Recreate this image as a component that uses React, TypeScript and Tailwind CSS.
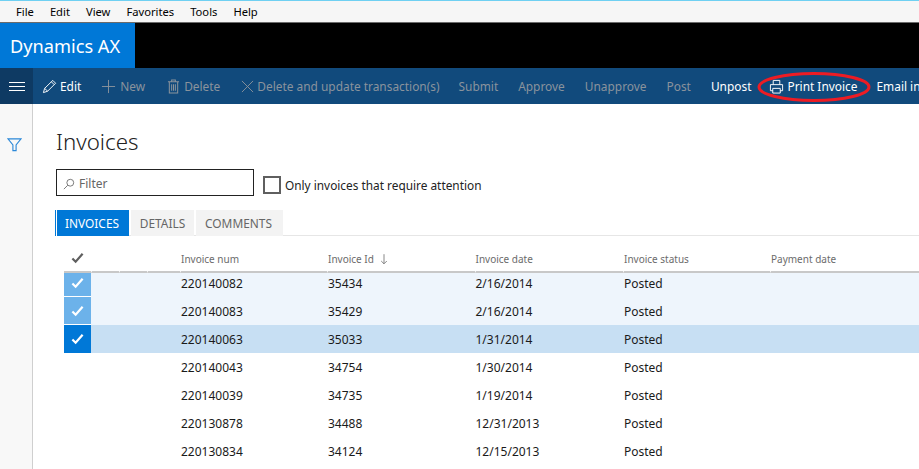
import React from "react";

const font = { fontFamily: '"Noto Sans", "Open Sans", sans-serif' };

const Check = ({ className }: { className: string }) => (
  <svg viewBox="0 0 14 12" className={className} fill="none" stroke="currentColor" strokeWidth="2.4">
    <path d="M1.5 6.5 L5 10 L12.5 1.5" />
  </svg>
);

const menus = ["File", "Edit", "View", "Favorites", "Tools", "Help"];

const rows = [
  ["220140082", "35434", "2/16/2014", 1],
  ["220140083", "35429", "2/16/2014", 1],
  ["220140063", "35033", "1/31/2014", 2],
  ["220140043", "34754", "1/30/2014", 0],
  ["220140039", "34735", "1/19/2014", 0],
  ["220130878", "34488", "12/31/2013", 0],
  ["220130834", "34124", "12/15/2013", 0],
] as const;

const Action = ({ label, on, icon, className }: { label: string; on?: boolean; icon?: React.ReactNode; className: string }) => (
  <div className={`flex items-center shrink-0 whitespace-nowrap pt-[2px] ${on ? "text-white" : "text-[#8a939c]"} ${className}`}>
    {icon}
    <span>{label}</span>
  </div>
);

export default function App() {
  return (
    <div className="relative w-[919px] h-[469px] overflow-hidden bg-white text-[12px] text-[#1a1a1a]" style={font}>
      <div className="h-[23px] bg-[#f6f6f6] border-t border-t-[#6fd0f2] border-b border-b-[#6b6b6b] flex items-center text-[11.2px] text-black gap-[16px] pl-[16px] pt-[2px]">
        {menus.map((m) => (
          <span key={m}>{m}</span>
        ))}
      </div>
      <div className="h-[45px] bg-black flex">
        <div className="w-[135px] bg-[#0078d7] text-white text-[18.2px] flex items-center pl-[10px] pt-[2px]">Dynamics AX</div>
      </div>
      <div className="h-[36px] bg-[#114a7c] flex items-center text-[11.9px] overflow-hidden">
        <div className="w-[33px] h-full bg-[#0e3a63] flex flex-col justify-center items-center gap-[3px] shrink-0">
          <div className="w-[16px] h-px bg-white" />
          <div className="w-[16px] h-px bg-white" />
          <div className="w-[16px] h-px bg-white" />
        </div>
        <Action on label="Edit" className="ml-[9px] gap-[3px]" icon={
          <svg viewBox="0 0 16 16" className="w-[15px] h-[15px]" fill="none" stroke="currentColor" strokeWidth="1"><path d="M1.5 14.5 L2.8 10 L11.5 1.5 L14.5 4.5 L6 13 Z M2.8 10 L6 13 M10 3 L13 6" /></svg>
        } />
        <div className="w-px h-[28px] bg-[#46708f] ml-[10px]" />
        <Action label="New" className="ml-[10px] gap-[4px]" icon={
          <svg viewBox="0 0 16 16" className="w-[15px] h-[15px]" fill="none" stroke="currentColor" strokeWidth="1"><path d="M8 1 V15 M1 8 H15" /></svg>
        } />
        <div className="w-px h-[28px] bg-[#46708f] ml-[10px]" />
        <Action label="Delete" className="ml-[12px] gap-[4px]" icon={
          <svg viewBox="0 0 14 16" className="w-[13px] h-[15px]" fill="none" stroke="currentColor" strokeWidth="1.1"><path d="M1 3 H13 M5 3 V1 H9 V3 M2.5 3 V15 H11.5 V3 M5 5.5 V12.5 M7 5.5 V12.5 M9 5.5 V12.5" /></svg>
        } />
        <Action label="Delete and update transaction(s)" className="ml-[21px] gap-[3px]" icon={
          <svg viewBox="0 0 14 14" className="w-[13px] h-[13px]" fill="none" stroke="currentColor" strokeWidth="1"><path d="M1 1 L13 13 M13 1 L1 13" /></svg>
        } />
        <Action label="Submit" className="ml-[19px]" />
        <Action label="Approve" className="ml-[20px]" />
        <Action label="Unapprove" className="ml-[20px]" />
        <Action label="Post" className="ml-[20px]" />
        <Action on label="Unpost" className="ml-[20px]" />
        <Action on label="Print Invoice" className="ml-[18px] gap-[3px]" icon={
          <svg viewBox="0 0 16 16" className="w-[15px] h-[15px]" fill="none" stroke="currentColor" strokeWidth="1"><path d="M4.5 6 V1.5 H11.5 V6 M4 12.5 H1.5 V6 H14.5 V12.5 H12 M4 10 H12 V15 H4 Z" /></svg>
        } />
        <Action on label="Email in" className="ml-[19px]" />
      </div>
      <div className="flex h-[365px]">
        <div className="w-[33px] shrink-0 bg-[#f8f8f8] border-r border-r-[#cfcfcf] pt-[33px] pl-[7px]">
          <svg viewBox="0 0 16 16" className="w-[15px] h-[15px] text-[#2b88d8]" fill="none" stroke="currentColor" strokeWidth="1.2"><path d="M1 2 H15 L9.7 8.5 V14.5 H6.3 V8.5 Z" /></svg>
        </div>
        <div className="flex-1 min-w-0">
          <div className="ml-[23px] mt-[22px] text-[22.3px] font-light leading-[32px] text-[#222]">Invoices</div>
          <div className="ml-[23px] mt-[11px] flex items-start">
            <div className="w-[198px] h-[27px] border border-[#222] flex items-center pl-[6px] gap-[4px] text-[#666] pt-[2px]">
              <svg viewBox="0 0 14 14" className="w-[12px] h-[12px]" fill="none" stroke="currentColor" strokeWidth="1"><circle cx="8.5" cy="5.5" r="4" /><path d="M5.5 8.5 L1 13" /></svg>
              <span>Filter</span>
            </div>
            <div className="ml-[9px] mt-[7px] w-[18px] h-[18px] border-2 border-[#5f5f5f]" />
            <span className="ml-[4px] mt-[8px] text-[11.85px] text-[#222] whitespace-nowrap">Only invoices that require attention</span>
          </div>
          <div className="ml-[22px] mt-[14px] h-[26px] flex border-b border-b-[#e6e6e6] text-[11.9px]">
            <div className="h-[26px] w-[73px] ml-px bg-[#0078d7] border-l border-l-white shadow-[-1px_0_0_0_#0078d7] text-white flex items-center justify-center pt-[2px] pr-[2px]">INVOICES</div>
            <div className="h-[26px] w-[63px] ml-[2px] bg-[#f3f3f3] text-[#666] flex items-center justify-center pt-[2px]">DETAILS</div>
            <div className="h-[26px] w-[87px] ml-[2px] bg-[#f3f3f3] text-[#666] flex items-center justify-center pt-[2px] pr-[2px]">COMMENTS</div>
          </div>
          <div className="ml-[31px]">
            <div className="h-[37px] grid grid-cols-[116px_147px_147.5px_148.5px_147px_1fr] text-[10px] text-[#6b6b6b]">
              {["", "Invoice num", "Invoice Id", "Invoice date", "Invoice status", "Payment date"].map((h, i) =>
                i === 0 ? (
                  <div key={i} className="grid grid-cols-[27px_28px_28px_33px] h-full">
                    <div className="border-b-2 border-b-[#c8c8c8] flex items-center justify-center pt-[8px] text-[#5f5f5f]"><Check className="w-[13px] h-[12px]" /></div>
                    <div className="border-b-2 border-b-[#c8c8c8] border-l border-l-white" />
                    <div className="border-b-2 border-b-[#c8c8c8] border-l border-l-white" />
                    <div className="border-b-2 border-b-[#c8c8c8] border-l border-l-white" />
                  </div>
                ) : (
                  <div key={i} className="flex items-center gap-[6px] pt-[11px] border-b-2 border-b-[#c8c8c8] border-l border-l-white">
                    <span>{h}</span>
                    {i === 2 && (
                      <svg viewBox="0 0 10 14" className="w-[8px] h-[12px]" fill="none" stroke="currentColor" strokeWidth="1"><path d="M5 1 V13 M1.5 9.5 L5 13 L8.5 9.5" /></svg>
                    )}
                  </div>
                )
              )}
            </div>
            {rows.map((r, i) => (
              <div
                key={i}
                className={`grid grid-cols-[117px_147px_147.5px_148.5px_147px_1fr] ${i === 0 ? "h-[24px]" : "h-[28px]"} ${r[3] === 1 ? "bg-[#eef5fc]" : r[3] === 2 ? "bg-[#c7dff3]" : ""}`}
              >
                <div className="flex">
                  {r[3] > 0 && (
                    <div className={`w-[27px] flex items-center justify-center text-white ${r[3] === 1 ? "bg-[#6cb2ea] border-b border-b-white" : "bg-[#0078d7]"} ${i === 0 ? "pb-[4px]" : ""}`}>
                      <Check className="w-[13px] h-[12px]" />
                    </div>
                  )}
                </div>
                <div className={`flex items-center ${i === 0 ? "pb-[2px]" : "pt-[2px]"}`}>{r[0]}</div>
                <div className={`flex items-center ${i === 0 ? "pb-[2px]" : "pt-[2px]"}`}>{r[1]}</div>
                <div className={`flex items-center ${i === 0 ? "pb-[2px]" : "pt-[2px]"}`}>{r[2]}</div>
                <div className={`flex items-center ${i === 0 ? "pb-[2px]" : "pt-[2px]"}`}>Posted</div>
                <div />
              </div>
            ))}
          </div>
        </div>
      </div>
      <svg className="absolute left-[757px] top-[70px] w-[116px] h-[34px]" viewBox="0 0 116 34" fill="none">
        <ellipse cx="57" cy="17" rx="55" ry="13.5" stroke="#ed1c24" strokeWidth="3" />
      </svg>
    </div>
  );
}
